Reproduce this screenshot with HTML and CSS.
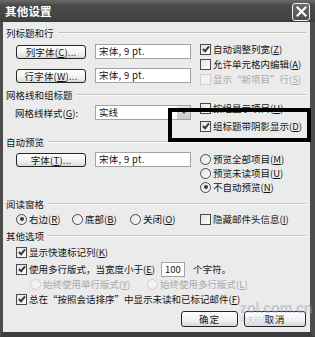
FILE: index.html
```html
<!DOCTYPE html>
<html lang="zh-CN">
<head>
    <meta charset="UTF-8">
    <title>其他设置</title>
    <link rel="stylesheet" href="styles.css">
</head>
<body>
    <div class="window">
        <div class="titlebar">
            <span class="title">其他设置</span>
            <span class="close">
                <svg width="11" height="11" viewBox="0 0 11 11"><path d="M1.5 1.5 L9.5 9.5 M9.5 1.5 L1.5 9.5" stroke="#fff" stroke-width="2.2" stroke-linecap="square"/></svg>
            </span>
        </div>

        <div class="content">
            <!-- 列标题和行 -->
            <div class="group g1">
                <div class="group-title"><span>列标题和行</span></div>
                <div class="group-body">
                    <div class="left">
                        <div class="row">
                            <span class="btn w70">列字体(<u>C</u>)...</span>
                            <span class="textbox">宋体, 9 pt.</span>
                        </div>
                        <div class="row">
                            <span class="btn w70">行字体(<u>W</u>)...</span>
                            <span class="textbox">宋体, 9 pt.</span>
                        </div>
                    </div>
                    <div class="right r1">
                        <div class="opt"><span class="cb on"></span>自动调整列宽(<u>Z</u>)</div>
                        <div class="opt"><span class="cb"></span>允许单元格内编辑(<u>A</u>)</div>
                        <div class="opt disabled"><span class="cb"></span>显示“新项目”行(<u>S</u>)</div>
                    </div>
                </div>
            </div>

            <!-- 网格线和组标题 -->
            <div class="group g2">
                <div class="group-title"><span>网格线和组标题</span></div>
                <div class="group-body">
                    <div class="left l2">
                        <div class="row">
                            <span class="field-label">网格线样式(<u>G</u>):</span>
                            <span class="select">实线<span class="arrow"></span></span>
                        </div>
                    </div>
                    <div class="right r2">
                        <div class="opt"><span class="cb"></span>按组显示项目(<u>H</u>)</div>
                        <div class="opt"><span class="cb on"></span>组标题带阴影显示(<u>D</u>)</div>
                    </div>
                </div>
            </div>

            <!-- 自动预览 -->
            <div class="group g3">
                <div class="group-title"><span>自动预览</span></div>
                <div class="group-body">
                    <div class="left">
                        <div class="row">
                            <span class="btn w70">字体(<u>T</u>)...</span>
                            <span class="textbox">宋体, 9 pt.</span>
                        </div>
                    </div>
                    <div class="right r3">
                        <div class="opt"><span class="rb"></span>预览全部项目(<u>M</u>)</div>
                        <div class="opt"><span class="rb"></span>预览未读项目(<u>U</u>)</div>
                        <div class="opt"><span class="rb on"></span>不自动预览(<u>N</u>)</div>
                    </div>
                </div>
            </div>

            <!-- 阅读窗格 -->
            <div class="group g4">
                <div class="group-title"><span>阅读窗格</span></div>
                <div class="group-body pane-row">
                    <div class="opt o-right"><span class="rb on"></span>右边(<u>R</u>)</div>
                    <div class="opt o-bottom"><span class="rb"></span>底部(<u>B</u>)</div>
                    <div class="opt o-off"><span class="rb"></span>关闭(<u>O</u>)</div>
                    <div class="opt"><span class="cb"></span>隐藏邮件头信息(<u>I</u>)</div>
                </div>
            </div>

            <!-- 其他选项 -->
            <div class="group g5">
                <div class="group-title"><span>其他选项</span></div>
                <div class="group-body stack">
                    <div class="opt"><span class="cb on"></span>显示快速标记列(<u>K</u>)</div>
                    <div class="opt multi">
                        <span class="cb on"></span>使用多行版式，当宽度小于(<u>E</u>)
                        <span class="numbox">100</span>
                        <span class="suffix">个字符。</span>
                    </div>
                    <div class="sub-row">
                        <div class="opt disabled o-single"><span class="rb"></span>始终使用单行版式(<u>Y</u>)</div>
                        <div class="opt disabled"><span class="rb"></span>始终使用多行版式(<u>L</u>)</div>
                    </div>
                    <div class="opt last"><span class="cb on"></span>总在“按照会话排序”中显示未读和已标记邮件(<u>F</u>)</div>
                </div>
            </div>

            <div class="actions">
                <span class="btn ok">确定</span>
                <span class="btn cancel">取消</span>
            </div>
        </div>

        <!-- 截图上的标注框 -->
        <div class="highlight"></div>
        <div class="watermark">
            <span class="wm-site">zol.com.cn</span>
            <span class="wm-name">中关村在线</span>
        </div>
    </div>
</body>
</html>
```

FILE: styles.css
```css
body {
    margin: 0;
    background: #ffffff;
    font-family: "Noto Sans CJK SC", "Liberation Sans", sans-serif;
    font-size: 9.5px;
    color: #151515;
}
.window {
    position: relative;
    width: 315px;
    height: 337px;
    display: flex;
    flex-direction: column;
    overflow: hidden;
}
.titlebar {
    height: 22px;
    flex-shrink: 0;
    display: flex;
    align-items: center;
    justify-content: space-between;
    padding: 0 5px 0 5px;
    background: linear-gradient(#6a6a6a, #4a4a4a 25%, #444 80%, #3c3c3c);
}
.title {
    color: #fff;
    font-weight: bold;
    font-size: 11.5px;
    letter-spacing: 0.2px;
}
.close {
    width: 16px;
    height: 16px;
    margin-top: 1px;
    border: 1px solid #f2f2f2;
    border-radius: 3px;
    background: linear-gradient(#6a6a6a, #4f4f4f);
    display: flex;
    align-items: center;
    justify-content: center;
}
.content {
    flex: 1;
    background: #ebebeb;
    border-left: 3px solid #4c4c4c;
    border-right: 5px solid #4c4c4c;
    border-bottom: 5px solid #3c3c3c;
    padding: 5px 4px 0 3px;
}
.group-title {
    display: flex;
    align-items: center;
    height: 12px;
    line-height: 12px;
}
.group-title::after {
    content: '';
    flex: 1;
    margin-left: 4px;
    border-top: 1px solid #c2c2c2;
    border-bottom: 1px solid #fafafa;
}
.group-body {
    display: flex;
    padding-left: 10px;
}
.g1 .group-body { padding-top: 4px; }
.g2 { margin-top: 3px; }
.g3 { margin-top: 3px; }
.g3 .group-body { padding-top: 4px; }
.g4 { margin-top: 4px; }
.g4 .group-body { padding-top: 2px; }
.g5 { margin-top: 4px; }
.g5 .group-body { padding-top: 3px; }

.left {
    width: 175px;
    display: flex;
    flex-direction: column;
    gap: 9px;
}
.g1 .left { padding-top: 1px; }
.l2 { padding-top: 4px; }
.right {
    margin-left: 9px;
    display: flex;
    flex-direction: column;
}
.r1 { margin-top: -1px; gap: 1px; }
.r2 { gap: 4px; }
.row {
    display: flex;
    align-items: center;
    justify-content: space-between;
}
.btn {
    box-sizing: border-box;
    height: 14px;
    display: inline-flex;
    align-items: center;
    justify-content: center;
    border: 1px solid #262626;
    border-radius: 3px;
    background: linear-gradient(#fdfdfd, #f1f1f1 60%, #d8d8d8);
    letter-spacing: 0.2px;
}
.w70 { width: 70px; }
.textbox {
    box-sizing: border-box;
    width: 96px;
    height: 15px;
    line-height: 13px;
    padding-left: 3px;
    background: #fff;
    border: 1px solid #a3a3a3;
    letter-spacing: 0.3px;
}
.field-label {
    margin-left: -1px;
}
.select {
    box-sizing: border-box;
    width: 96px;
    height: 15px;
    line-height: 13px;
    padding-left: 3px;
    background: #fff;
    border: 1px solid #a3a3a3;
    display: flex;
    justify-content: space-between;
}
.arrow {
    width: 13px;
    height: 13px;
    background: linear-gradient(#e6e6e6, #c9c9c9);
    display: flex;
    align-items: center;
    justify-content: center;
}
.arrow::after {
    content: '';
    border-left: 3px solid transparent;
    border-right: 3px solid transparent;
    border-top: 3px solid #555;
}
.opt {
    display: flex;
    align-items: center;
    height: 14px;
    white-space: nowrap;
}
.opt.disabled {
    color: #aaaaaa;
}
.cb {
    position: relative;
    box-sizing: border-box;
    width: 11px;
    height: 11px;
    margin-right: 2px;
    flex-shrink: 0;
    border: 1px solid #4a4a4a;
    background: linear-gradient(135deg, #e2e2e2, #ffffff);
}
.cb.on::after {
    content: '';
    position: absolute;
    left: 3px;
    top: 0px;
    width: 2px;
    height: 5px;
    border-right: 2px solid #3a3a3a;
    border-bottom: 2px solid #3a3a3a;
    transform: rotate(40deg);
}
.disabled .cb,
.disabled .rb {
    border-color: #cfcfcf;
    background: #f2f2f2;
}
.rb {
    box-sizing: border-box;
    width: 11px;
    height: 11px;
    margin-right: 2px;
    flex-shrink: 0;
    border: 1px solid #4a4a4a;
    border-radius: 50%;
    background: linear-gradient(135deg, #e0e0e0, #ffffff);
    display: flex;
    align-items: center;
    justify-content: center;
}
.rb.on::after {
    content: '';
    width: 4px;
    height: 4px;
    border-radius: 50%;
    background: #3a3a3a;
}
.pane-row .o-right { width: 56px; }
.pane-row .o-bottom { width: 58px; }
.pane-row .o-off { width: 70px; }
.stack {
    flex-direction: column;
}
.multi {
    height: 16px;
    margin-top: 2px;
}
.numbox {
    box-sizing: border-box;
    width: 24px;
    height: 15px;
    line-height: 13px;
    margin-left: 6px;
    padding-left: 3px;
    background: #fff;
    border: 1px solid #a3a3a3;
}
.suffix {
    margin-left: 8px;
}
.sub-row {
    display: flex;
    padding-left: 14px;
}
.o-single { width: 117px; }
.last { margin-top: 1px; }
.actions {
    display: flex;
    justify-content: flex-end;
    gap: 6px;
    margin-top: 5px;
}
.actions .btn {
    height: 16px;
    letter-spacing: 1px;
}
.ok { width: 57px; }
.cancel { width: 62px; }

.highlight {
    position: absolute;
    left: 168px;
    top: 108px;
    width: 143px;
    height: 34px;
    box-sizing: border-box;
    border: 4px solid #000;
}
.watermark {
    position: absolute;
    left: 240px;
    top: 302px;
    display: flex;
    flex-direction: column;
    opacity: 0.5;
    pointer-events: none;
}
.wm-site {
    font-family: "Liberation Sans", sans-serif;
    font-size: 14px;
    font-weight: bold;
    color: #9aa6c0;
    line-height: 13px;
}
.wm-name {
    font-size: 7px;
    color: #9aa6c0;
    line-height: 9px;
}
```
